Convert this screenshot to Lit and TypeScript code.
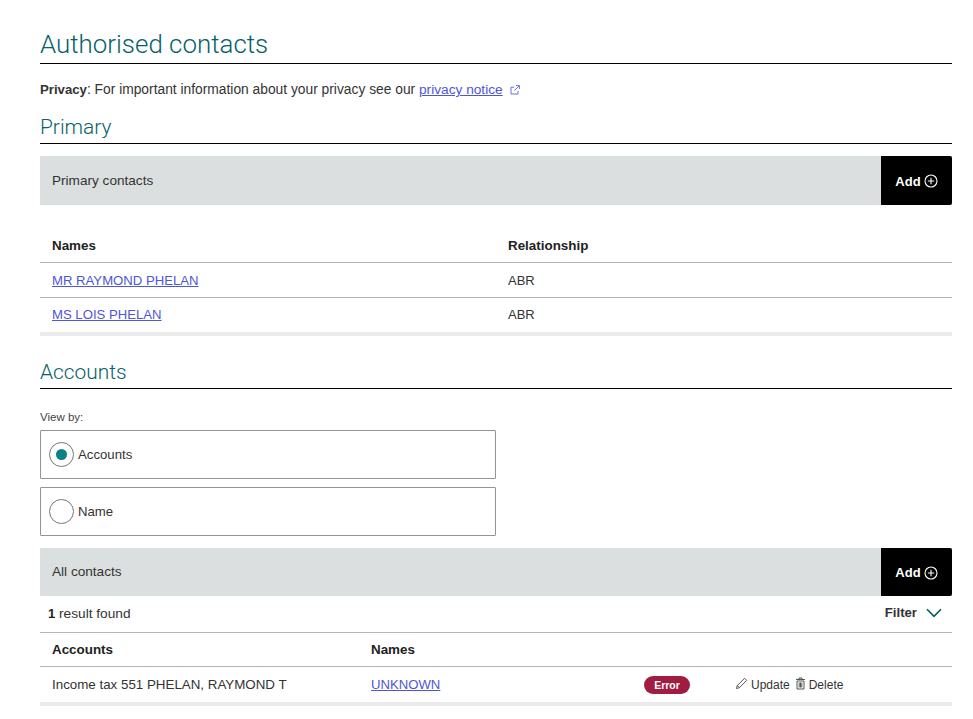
import { LitElement, html, css } from "lit";
import { customElement } from "lit/decorators.js";

const addIcon = html`<svg class="plus" viewBox="0 0 14 14" width="14" height="14"><circle cx="7" cy="7" r="6" fill="none" stroke="#fff" stroke-width="1.1"/><path d="M7 3.8v6.4M3.8 7h6.4" stroke="#fff" stroke-width="1.1" fill="none"/></svg>`;

@customElement("app-root")
export class AppRoot extends LitElement {
  static styles = css`
    :host { display: block; font-family: "Liberation Sans", Arial, sans-serif; color: #333; font-size: 13px; background: #fff; }
    * { box-sizing: border-box; }
    .page { padding: 26px 21px 13px 40px; display: flex; flex-direction: column; }
    h1, h2 { margin: 0; font-weight: 300; color: #056268; border-bottom: 1px solid #000; font-family: Roboto, "Liberation Sans", sans-serif; }
    h1 { font-size: 25.9px; line-height: 37px; height: 38px; }
    h2 { font-size: 20.9px; line-height: 33px; height: 33px; }
    .privacy { margin: 17px 0 0; line-height: 18px; height: 30px; font-size: 13.7px; color: #333; display: flex; align-items: baseline; white-space: pre; }
    .privacy b { font-weight: 700; font-size: 13.2px; }
    .privacy span { font-size: 13.8px; }
    a { color: #4f55d8; text-decoration: underline; }
    .ext { margin: 0 0 0 6px; align-self: flex-start; margin-top: 3px; }
    .bar { display: flex; align-items: stretch; justify-content: space-between; background: #dcdfe0; height: 49px; margin-top: 12px; }
    .bar.second { height: 48px; }
    .bar .label { align-self: center; padding: 0 0 1px 12px; color: #333; font-size: 13.6px; }
    .add { width: 71px; background: #000; color: #fff; display: flex; align-items: center; justify-content: center; gap: 3px; border: 0; font: inherit; font-weight: 700; padding: 1px 0 0; border-radius: 0 2px 2px 0; }
    .grid1 { display: grid; grid-template-columns: 456px 1fr; }
    .head { font-weight: 700; color: #222; font-size: 13.4px; }
    .cell { padding-left: 12px; display: flex; align-items: center; border-bottom: 1px solid #b5b5b5; }
    .cell.tall { height: 35px; }
    .cell.short { height: 34px; }
    .cell.plain { border-bottom: 0; padding-bottom: 2px; }
    .top { margin-top: 23px; }
    .upper { font-size: 13.15px; }
    .band { height: 4px; background: #ebebeb; }
    .accounts { margin-top: 20px; }
    .viewby { font-size: 11.5px; margin: 21px 0 0; line-height: 14px; color: #444; }
    .radio { width: 456px; height: 49px; border: 1px solid #949494; display: flex; align-items: center; padding-left: 8px; gap: 4px; margin-top: 6px; border-radius: 1px; font-size: 13.2px; }
    .radio + .radio { margin-top: 8px; }
    .dot { width: 25px; height: 25px; border: 1px solid #777; border-radius: 50%; display: flex; align-items: center; justify-content: center; }
    .dot i { display: block; width: 11px; height: 11px; border-radius: 50%; background: #0b8285; }
    .result { display: flex; justify-content: space-between; align-items: center; height: 37px; border-bottom: 1px solid #b5b5b5; padding: 0 10px 2px 8px; font-size: 13.7px; }
    .result b { color: #222; font-size: 13px; }
    .filter { display: flex; align-items: center; gap: 9px; font-weight: 700; color: #333; font-size: 13.2px; padding-bottom: 1px; }
    .grid2 { display: grid; grid-template-columns: 319px 273px 103px 1fr; }
    .pill { background: #a01c41; color: #fff; font-weight: 700; font-size: 10.5px; border-radius: 9px; width: 46px; height: 18px; display: flex; align-items: center; justify-content: center; }
    .cell.noline { border-bottom: 0; height: 35px; }
    .cell.actions { font-size: 12px; gap: 3px; padding-left: 0; }
    .actions svg { margin-top: -3px; }
    .actions span + svg { margin-left: 2px; }
    .income { font-size: 13.35px; }
  `;

  render() {
    return html`<div class="page">
      <h1>Authorised contacts</h1>
      <p class="privacy"><b>Privacy</b><span>: For important information about your privacy see our </span><a href="#">privacy notice</a><svg class="ext" width="12" height="12" viewBox="0 0 12 12" fill="none" stroke="#6b70dc" stroke-width="1"><path d="M9 7v3H2V3.2h3.2"/><path d="M7 1.6h3.4V5M10.2 1.8 5.4 6.6"/></svg></p>
      <h2>Primary</h2>
      <div class="bar"><span class="label">Primary contacts</span><button class="add">Add ${addIcon}</button></div>
      <div class="grid1 top">
        <div class="cell tall head">Names</div><div class="cell tall head">Relationship</div>
        <div class="cell tall upper"><a href="#">MR RAYMOND PHELAN</a></div><div class="cell tall">ABR</div>
        <div class="cell short plain upper"><a href="#">MS LOIS PHELAN</a></div><div class="cell short plain">ABR</div>
      </div>
      <div class="band"></div>
      <h2 class="accounts">Accounts</h2>
      <p class="viewby">View by:</p>
      <div class="radio"><span class="dot"><i></i></span><span>Accounts</span></div>
      <div class="radio"><span class="dot"></span><span>Name</span></div>
      <div class="bar second"><span class="label">All contacts</span><button class="add">Add ${addIcon}</button></div>
      <div class="result"><span><b>1</b> result found</span><span class="filter">Filter <svg width="16" height="10" viewBox="0 0 16 10" fill="none" stroke="#005f61" stroke-width="1.6"><path d="M1 1.2 8 8.4l7-7.2"/></svg></span></div>
      <div class="grid2">
        <div class="cell head short">Accounts</div><div class="cell head short">Names</div><div class="cell short"></div><div class="cell short"></div>
        <div class="cell noline income">Income tax 551 PHELAN, RAYMOND T</div>
        <div class="cell noline upper"><a href="#">UNKNOWN</a></div>
        <div class="cell noline"><span class="pill">Error</span></div>
        <div class="cell noline actions">
          <svg width="13" height="13" viewBox="0 0 13 13" fill="none" stroke="#444" stroke-width="0.9"><path d="M1.5 11.5l.8-3L9.6 1.3l2.1 2.1-7.3 7.3z"/><path d="M2.3 8.5l2.1 2.1"/></svg>
          <span>Update</span>
          <svg width="11" height="13" viewBox="0 0 11 13" fill="none" stroke="#444" stroke-width="0.9"><path d="M1 2.5h9M4 2.3V1h3v1.3M2 4h7v8H2zM4.2 5.5v5M5.5 5.5v5M6.8 5.5v5"/></svg>
          <span>Delete</span>
        </div>
      </div>
      <div class="band"></div>
    </div>`;
  }
}
